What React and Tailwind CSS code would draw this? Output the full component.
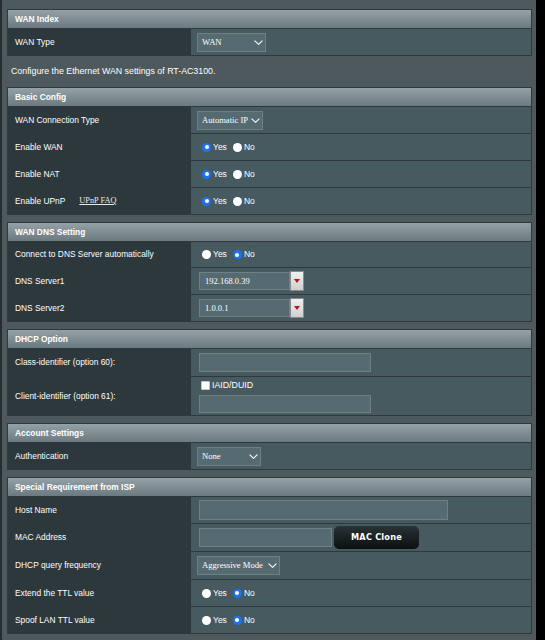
import React from 'react';

const sans = "font-['Liberation_Sans',Arial,sans-serif]";
const serif = "font-['Liberation_Serif','Times_New_Roman',serif]";

const Chevron = () => (
    <svg width="9" height="5" viewBox="0 0 9 5" className="shrink-0">
        <path d="M0.6 0.6 L4.5 4.3 L8.4 0.6" stroke="#fff" strokeWidth="1.1" fill="none" />
    </svg>
);

const Radio = ({ checked }) =>
    checked ? (
        <span className="flex items-center justify-center w-[9px] h-[9px] rounded-full bg-[#1d72f2] shrink-0">
            <span className="block w-[4px] h-[4px] rounded-full bg-white" />
        </span>
    ) : (
        <span className="block w-[9px] h-[9px] rounded-full bg-white shrink-0" />
    );

const YesNo = ({ yes }) => (
    <div className={`flex items-center ml-[11px] text-[8.5px] text-white ${sans}`}>
        <Radio checked={yes} />
        <span className="ml-[2px]">Yes</span>
        <span className="ml-[6px]"><Radio checked={!yes} /></span>
        <span className="ml-[2px]">No</span>
    </div>
);

const Select = ({ text, w }) => (
    <div
        className={`ml-[6px] h-[19px] flex items-center pl-[4px] pr-[2px] bg-[#566b71] border border-[#6e8086] text-white text-[8.6px] ${serif}`}
        style={{ width: w }}
    >
        <span className="flex-1 whitespace-nowrap overflow-hidden">{text}</span>
        <Chevron />
    </div>
);

const TextBox = ({ w, h = 19 }) => (
    <div className="bg-[#566b71] border border-[#6e8086]" style={{ width: w, height: h }} />
);

const DnsField = ({ value }) => (
    <div className="flex items-center ml-[8px]">
        <div className={`w-[91px] h-[18px] flex items-center pl-[5px] bg-[#566b71] border border-[#6e8086] text-white text-[8.5px] ${serif}`}>
            {value}
        </div>
        <div className="w-[14px] h-[20px] flex items-center justify-center bg-linear-to-b from-[#f0f0f0] to-[#cfcfcf] border border-[#8a8a8a]">
            <svg width="6" height="4" viewBox="0 0 6 4">
                <path d="M0 0 H6 L3 4 Z" fill="#b3161b" />
            </svg>
        </div>
    </div>
);

const Header = ({ children }) => (
    <div className={`h-[19px] flex items-center pl-[7px] bg-linear-to-b from-[#94a2a7] to-[#6b7a80] border-b border-[#2f383b] text-white font-bold text-[8.4px] ${sans}`}>
        {children}
    </div>
);

const Row = ({ label, h = 27, children }) => (
    <div className="flex border-b border-[#2f383b]" style={{ height: h }}>
        <div className={`w-[183px] shrink-0 flex items-center pl-[7px] bg-[#2d383c] text-white text-[8.4px] ${sans}`}>
            {label}
        </div>
        <div className="flex-1 flex items-center bg-[#475a5f]">{children}</div>
    </div>
);

const Table = ({ title, children, className = '' }) => (
    <div className={`border-t border-x border-[#2f383b] ${className}`}>
        <Header>{title}</Header>
        {children}
    </div>
);

export default function App() {
    return (
        <div className="flex w-[545px] min-h-[640px]">
            <div className="w-[2px] shrink-0 bg-[#262c2f]" />
            <div className="flex-1 bg-[#4d595d] pl-[5px] pr-[4px] pt-[9px]">
                <Table title="WAN Index">
                    <Row label="WAN Type">
                        <Select text="WAN" w={69} />
                    </Row>
                </Table>

                <div className={`h-[31px] flex items-center pl-[4px] text-white text-[8.8px] ${sans}`}>
                    Configure the Ethernet WAN settings of RT-AC3100.
                </div>

                <Table title="Basic Config">
                    <Row label="WAN Connection Type">
                        <Select text="Automatic IP" w={66} />
                    </Row>
                    <Row label="Enable WAN"><YesNo yes /></Row>
                    <Row label="Enable NAT"><YesNo yes /></Row>
                    <Row label={<>Enable UPnP<span className={`ml-[14px] underline text-[8.3px] text-[#e8e8e8] ${serif}`}>UPnP FAQ</span></>}>
                        <YesNo yes />
                    </Row>
                </Table>

                <Table title="WAN DNS Setting" className="mt-[7px]">
                    <Row label="Connect to DNS Server automatically" h={26}><YesNo yes={false} /></Row>
                    <Row label="DNS Server1"><DnsField value="192.168.0.39" /></Row>
                    <Row label="DNS Server2"><DnsField value="1.0.0.1" /></Row>
                </Table>

                <Table title="DHCP Option" className="mt-[7px]">
                    <Row label="Class-identifier (option 60):" h={28}>
                        <div className="ml-[8px]"><TextBox w={172} /></div>
                    </Row>
                    <Row label="Client-identifier (option 61):" h={39}>
                        <div className="ml-[8px] flex flex-col">
                            <div className={`flex items-center ml-[2px] text-white text-[8.8px] ${sans}`}>
                                <span className="block w-[9px] h-[9px] bg-white border border-[#c8c8c8] rounded-[1px]" />
                                <span className="ml-[2px]">IAID/DUID</span>
                            </div>
                            <div className="mt-[3px]"><TextBox w={172} h={18} /></div>
                        </div>
                    </Row>
                </Table>

                <Table title="Account Settings" className="mt-[7px]">
                    <Row label="Authentication">
                        <Select text="None" w={64} />
                    </Row>
                </Table>

                <Table title="Special Requirement from ISP" className="mt-[7px]">
                    <Row label="Host Name">
                        <div className="ml-[8px]"><TextBox w={249} h={20} /></div>
                    </Row>
                    <Row label="MAC Address" h={28}>
                        <div className="ml-[8px] flex items-center">
                            <TextBox w={133} />
                            <div className="ml-[2px] w-[85px] h-[23px] flex items-center justify-center rounded-[5px] bg-linear-to-b from-[#2a3336] to-[#0c1011] text-white font-bold text-[8.2px] tracking-[0.2px] font-['DejaVu_Sans',Verdana,sans-serif]">
                                MAC Clone
                            </div>
                        </div>
                    </Row>
                    <Row label="DHCP query frequency" h={28}>
                        <Select text="Aggressive Mode" w={83} />
                    </Row>
                    <Row label="Extend the TTL value"><YesNo yes={false} /></Row>
                    <Row label="Spoof LAN TTL value"><YesNo yes={false} /></Row>
                </Table>
            </div>
            <div className="w-[9px] shrink-0 bg-black" />
        </div>
    );
}
